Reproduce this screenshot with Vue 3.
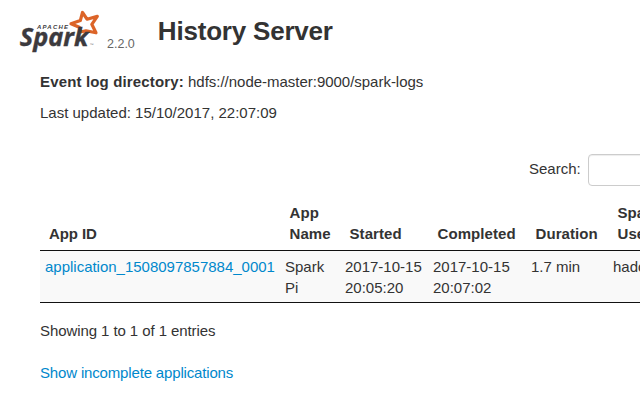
<script setup>
const columns = [
  { label: ['App ID'], width: 240 },
  { label: ['App', 'Name'], width: 60 },
  { label: ['Started'], width: 88 },
  { label: ['Completed'], width: 98 },
  { label: ['Duration'], width: 82 },
  { label: ['Spark', 'User'], width: 72 },
]
const rows = [
  {
    id: 'application_1508097857884_0001',
    cells: [['Spark', 'Pi'], ['2017-10-15', '20:05:20'], ['2017-10-15', '20:07:02'], ['1.7 min'], ['hadoop']],
  },
]
</script>

<template>
  <main class="page">
    <header class="head">
      <svg class="logo" width="80" height="46" viewBox="18 8 80 46" role="img" aria-label="Apache Spark">
        <path class="star" d="M82.5 12.5 L87 19.2 L97.3 16.4 L91.8 24.3 L96 32.8 L86 30.8 L80.5 32 L79.3 27.2 L71 23.8 L80.3 20.6 Z" />
        <text class="apache" x="37" y="29.2" textLength="31">APACHE</text>
        <text class="word" x="19.8" y="45.8" textLength="68.5" lengthAdjust="spacingAndGlyphs">Spark</text>
        <text class="tm" x="89.5" y="46">™</text>
      </svg>
      <span class="version">2.2.0</span>
      <h1>History Server</h1>
    </header>
    <p class="line directory"><strong>Event log directory:</strong> <span class="path">hdfs://node-master:9000/spark-logs</span></p>
    <p class="line updated">Last updated: 15/10/2017, 22:07:09</p>
    <label class="search"><span>Search:</span><input type="text" /></label>
    <table>
      <colgroup><col v-for="c in columns" :key="c.label[0]" :style="{ width: c.width + 'px' }" /></colgroup>
      <thead>
        <tr>
          <th v-for="c in columns" :key="c.label[0]"><div v-for="l in c.label" :key="l">{{ l }}</div></th>
        </tr>
      </thead>
      <tbody>
        <tr v-for="r in rows" :key="r.id">
          <td><a class="app">{{ r.id }}</a></td>
          <td v-for="(cell, i) in r.cells" :key="i"><div v-for="l in cell" :key="l">{{ l }}</div></td>
        </tr>
      </tbody>
    </table>
    <p class="line info">Showing 1 to 1 of 1 entries</p>
    <p class="line incomplete"><a>Show incomplete applications</a></p>
  </main>
</template>

<style>
body { margin: 0; background: #fff; overflow: hidden; }
</style>

<style scoped>
.page {
  box-sizing: border-box;
  width: 640px;
  height: 400px;
  overflow: hidden;
  padding-left: 40px;
  font: 15px/21px "Liberation Sans", Arial, sans-serif;
  color: #333;
}
.head { display: flex; height: 54px; margin-left: -22px; padding-top: 8px; box-sizing: border-box; }
.logo { flex: none; overflow: visible; }
.star { fill: none; stroke: #dc6428; stroke-width: 3.2; stroke-linejoin: round; }
.apache { font: italic bold 6px "Liberation Sans", sans-serif; fill: #3c3a3e; }
.word { font: italic bold 24.5px "Open Sans", sans-serif; fill: #3c3a3e; stroke: #3c3a3e; stroke-width: .4; }
.tm { font: 4px "Liberation Sans", sans-serif; fill: #777; }
.version { margin: 26px 0 0 9px; font-size: 12.5px; line-height: 21px; color: #666; }
h1 { width: 180px; margin: 8px 0 0 23px; font-size: 26px; line-height: 30px; font-weight: bold; letter-spacing: -.2px; white-space: nowrap; }
.line { margin: 0; white-space: nowrap; }
.directory { margin-top: 17px; }
.directory strong { letter-spacing: .15px; }
.path { letter-spacing: -.02px; }
.updated { margin-top: 10px; }
.search { display: flex; width: 680px; margin: 31px 0 0 489px; }
.search span { width: 59px; line-height: 30px; }
.search input { box-sizing: border-box; width: 216px; height: 32px; border: 1px solid #ccc; border-radius: 4px; box-shadow: inset 0 1px 1px rgba(0,0,0,.075); }
table { width: 640px; margin-top: 10px; table-layout: fixed; border-collapse: separate; border-spacing: 0; border-bottom: 1px solid #111; }
th { padding: 6px 0 6px 9.5px; text-align: left; vertical-align: bottom; border-bottom: 1px solid #111; letter-spacing: .08px; white-space: nowrap; }
th:first-child { padding-left: 9px; letter-spacing: -.1px; }
td { height: 42px; padding: 5px 0 4px 5px; vertical-align: top; background: #f9f9f9; white-space: nowrap; }
a { color: #08c; text-decoration: none; }
.app { letter-spacing: -.01px; }
.info { margin: 17px 0 21px; letter-spacing: -.08px; }
.incomplete { letter-spacing: -.16px; }
</style>
